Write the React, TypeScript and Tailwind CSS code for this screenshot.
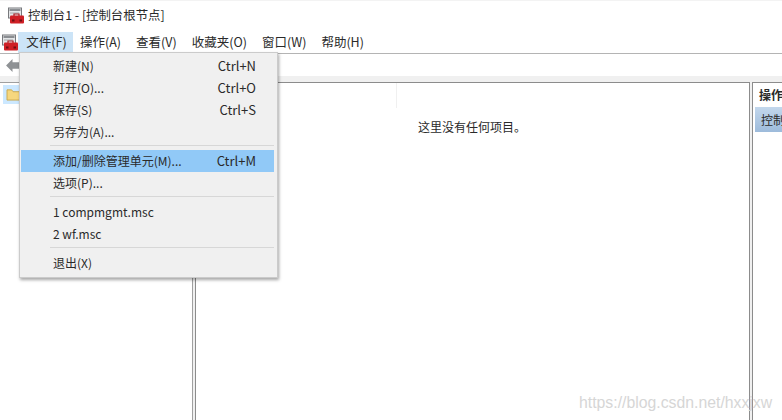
const font = { fontFamily: '"Noto Sans CJK SC", "Open Sans", sans-serif' };

function AppIcon({ className }: { className: string }) {
  return (
    <svg viewBox="0 0 16 16" className={className}>
      <rect x="0.5" y="0.5" width="13" height="10" fill="#e4e6e8" stroke="#77797c" />
      <rect x="1.5" y="1.5" width="11" height="2" fill="#8b8e92" />
      <rect x="2" y="5" width="9" height="1" fill="#a5a7aa" />
      <path d="M6 9 V6.5 H11 V9" fill="none" stroke="#a81c20" strokeWidth="1.2" />
      <rect x="2" y="8" width="14" height="8" rx="1" fill="#cf2026" />
      <rect x="4" y="12" width="2.5" height="2" fill="#6e0f13" />
      <rect x="11.5" y="12" width="2.5" height="2" fill="#6e0f13" />
    </svg>
  );
}

function MenuRow({ label, shortcut, active }: { label: string; shortcut?: string; active?: boolean }) {
  return (
    <div className={`flex h-[22px] items-center justify-between pl-[32px] pr-[18px] ${active ? "bg-[#91c9f7]" : ""}`}>
      <span>{label}</span>
      {shortcut && <span className="text-[13px]">{shortcut}</span>}
    </div>
  );
}

function Separator() {
  return <div className="ml-[29px] mb-[4px] mt-[2px] h-px bg-[#d7d7d7]" />;
}

export default function App() {
  const menus = ["操作(A)", "查看(V)", "收藏夹(O)", "窗口(W)", "帮助(H)"];
  return (
    <div style={font} className="relative flex h-[420px] w-[782px] flex-col overflow-hidden bg-white text-[12px] text-[#2a2a2a]">
      <div className="flex h-[32px] items-center border-t border-[#f3f3f3] pb-[2px] pl-[8px]">
        <AppIcon className="mr-[4px] h-[17px] w-[16px]" />
        <span className="text-[12.4px]">控制台1 - [控制台根节点]</span>
      </div>
      <div className="flex h-[22px] items-center border-b border-[#b4b4b4] text-[12.5px]">
        <AppIcon className="ml-[2px] h-[17px] w-[16px]" />
        <div className="flex h-[21px] w-[55px] items-center justify-center pl-[2px] bg-[#cce4f7]">文件(F)</div>
        <div className="ml-[7px] flex gap-[15px]">
          {menus.map((m) => (
            <span key={m}>{m}</span>
          ))}
        </div>
      </div>
      <div className="flex h-[22px] items-center pl-[5px]">
        <svg viewBox="0 0 14 14" className="h-[15px] w-[15px]">
          <path d="M1 7 L7 1 V4 H14 V10 H7 V13 Z" fill="#8f9295" />
        </svg>
      </div>
      <div className="flex min-h-0 flex-1 flex-col bg-[#f0f0f0] pt-[6px]">
        <div className="flex min-h-0 flex-1 gap-[2px]">
          <div className="w-[193px] border-r border-t border-[#a0a0a0] bg-white">
            <div className="ml-[3px] mt-[2px] flex h-[19px] w-[20px] items-center justify-center bg-[#cce8ff]">
              <svg viewBox="0 0 16 14" className="h-[13px] w-[15px]">
                <path d="M1 2 H6 L7.5 4 H15 V13 H1 Z" fill="#f6d77e" stroke="#c9a64c" />
              </svg>
            </div>
          </div>
          <div className="relative w-[555px] border-x border-t border-[#8c8c8c] bg-white">
            <div className="flex h-[25px]">
              <div className="w-[201px] border-r border-[#f0f0f0]" />
            </div>
            <div className="absolute left-[222px] top-[35px]">这里没有任何项目。</div>
          </div>
          <div className="min-w-0 flex-1 overflow-hidden border-l border-t border-[#8c8c8c] bg-white pl-[2px]">
            <div className="flex h-[24px] items-center whitespace-nowrap pl-[4px] font-bold">操作</div>
            <div className="flex h-[25px] items-center whitespace-nowrap bg-gradient-to-b from-[#c3d7ec] to-[#9dbbdb] pl-[6px]">控制台根节点</div>
          </div>
        </div>
      </div>

      <div className="absolute left-[19px] top-[52px] h-[226px] w-[259px] border border-[#cbcbcb] bg-[#f0f0f0] pb-[2px] pl-[1px] pr-[3px] pt-[2px] shadow-[1px_2px_3px_rgba(0,0,0,0.35)]">
        <MenuRow label="新建(N)" shortcut="Ctrl+N" />
        <MenuRow label="打开(O)..." shortcut="Ctrl+O" />
        <MenuRow label="保存(S)" shortcut="Ctrl+S" />
        <MenuRow label="另存为(A)..." />
        <Separator />
        <MenuRow label="添加/删除管理单元(M)..." shortcut="Ctrl+M" active />
        <MenuRow label="选项(P)..." />
        <Separator />
        <MenuRow label="1 compmgmt.msc" />
        <MenuRow label="2 wf.msc" />
        <Separator />
        <MenuRow label="退出(X)" />
      </div>

      <div className="absolute left-[579px] top-[391px] text-[15.8px] text-[#d6d6d6]" style={{ fontFamily: '"Liberation Sans", sans-serif' }}>
        https://blog.csdn.net/hxxjxw
      </div>
    </div>
  );
}
